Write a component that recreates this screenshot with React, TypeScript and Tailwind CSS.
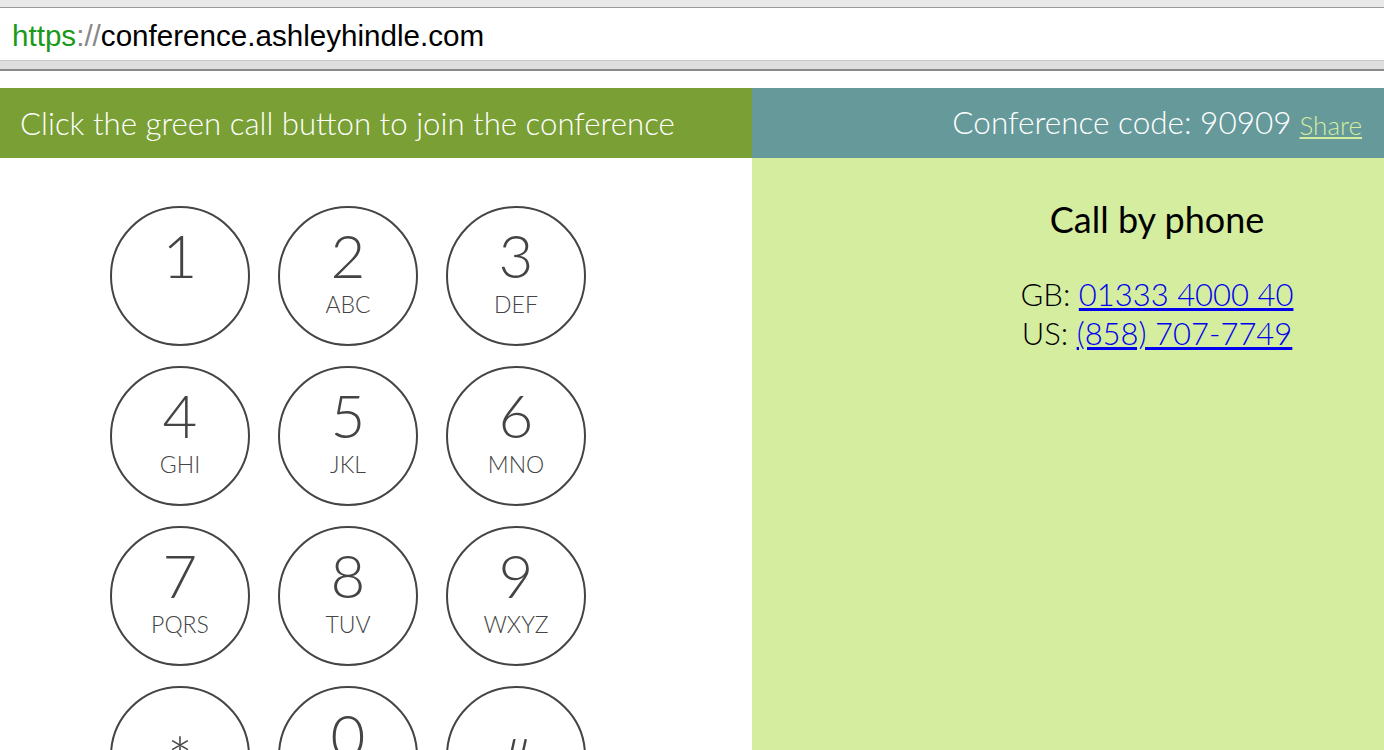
import React from "react";

const keys = [
  { d: "1", l: "" },
  { d: "2", l: "ABC" },
  { d: "3", l: "DEF" },
  { d: "4", l: "GHI" },
  { d: "5", l: "JKL" },
  { d: "6", l: "MNO" },
  { d: "7", l: "PQRS" },
  { d: "8", l: "TUV" },
  { d: "9", l: "WXYZ" },
  { d: "*", l: "" },
  { d: "0", l: "+" },
  { d: "#", l: "" },
];

function DialKey({ d, l }: { d: string; l: string }) {
  // * and # sit lower in the circle than the digits
  const low = d === "*" || d === "#";
  return (
    <button
      className={
        "w-[140px] h-[140px] rounded-full border-2 border-[#444] flex flex-col items-center text-[#444] bg-white " +
        (low ? "pt-[40px]" : "pt-[17px]")
      }
    >
      <span className="text-[60px] leading-none font-light">{d}</span>
      <span className="text-[23px] leading-none font-light mt-[8px] h-[23px]">{l}</span>
    </button>
  );
}

export default function App() {
  return (
    <div className="w-[1384px] h-[750px] overflow-hidden bg-white flex flex-col">
      {/* browser chrome */}
      <div className="h-[8px] bg-[#e9e9e9] border-b border-[#9a9a9a] shrink-0" />
      <div
        className="h-[52px] bg-white flex items-center pl-[12px] pt-[5px] text-[29.6px] shrink-0"
        style={{ fontFamily: '"Liberation Sans", Arial, sans-serif' }}
      >
        <span className="text-[#1a9a1a]">https</span>
        <span className="text-[#888]">://</span>
        <span className="text-black">conference.ashleyhindle.com</span>
      </div>
      <div className="h-[11px] bg-[#dedede] border-t border-[#c8c8c8] border-b-2 border-b-[#8a8a8a] shrink-0" />
      <div className="h-[17px] bg-white shrink-0" />

      <div className="flex flex-col flex-1" style={{ fontFamily: "Lato, 'Open Sans', sans-serif" }}>
        <div className="flex h-[70px] shrink-0">
          <div className="w-[752px] bg-[#799f35] flex items-center pl-[20px] text-white text-[31.2px] font-light">
            Click the green call button to join the conference
          </div>
          <div className="flex-1 bg-[#65999a] flex items-center justify-end pr-[22px] text-white text-[31.5px] font-light">
            <span>Conference code: 90909</span>
            <a href="#" className="ml-[8px] text-[26px] text-[#d4ed9f] underline mt-[4px]">
              Share
            </a>
          </div>
        </div>

        <div className="flex flex-1">
          <div className="w-[752px] bg-white pl-[110px] pt-[48px]">
            <div className="grid grid-cols-[140px_140px_140px] gap-x-[28px] gap-y-[20px]">
              {keys.map((k) => (
                <DialKey key={k.d} d={k.d} l={k.l} />
              ))}
            </div>
          </div>
          <div className="flex-1 bg-[#d4ed9f] pl-[178px] pt-[37px] text-center text-black">
            <div className="text-[36px] leading-[48px]">Call by phone</div>
            <div className="mt-[32px] text-[31px] leading-[39px] font-light">
              <div>
                GB:{" "}
                <a href="#" className="text-[#0000ee] underline">
                  01333 4000 40
                </a>
              </div>
              <div>
                US:{" "}
                <a href="#" className="text-[#0000ee] underline">
                  (858) 707-7749
                </a>
              </div>
            </div>
          </div>
        </div>
      </div>
    </div>
  );
}
